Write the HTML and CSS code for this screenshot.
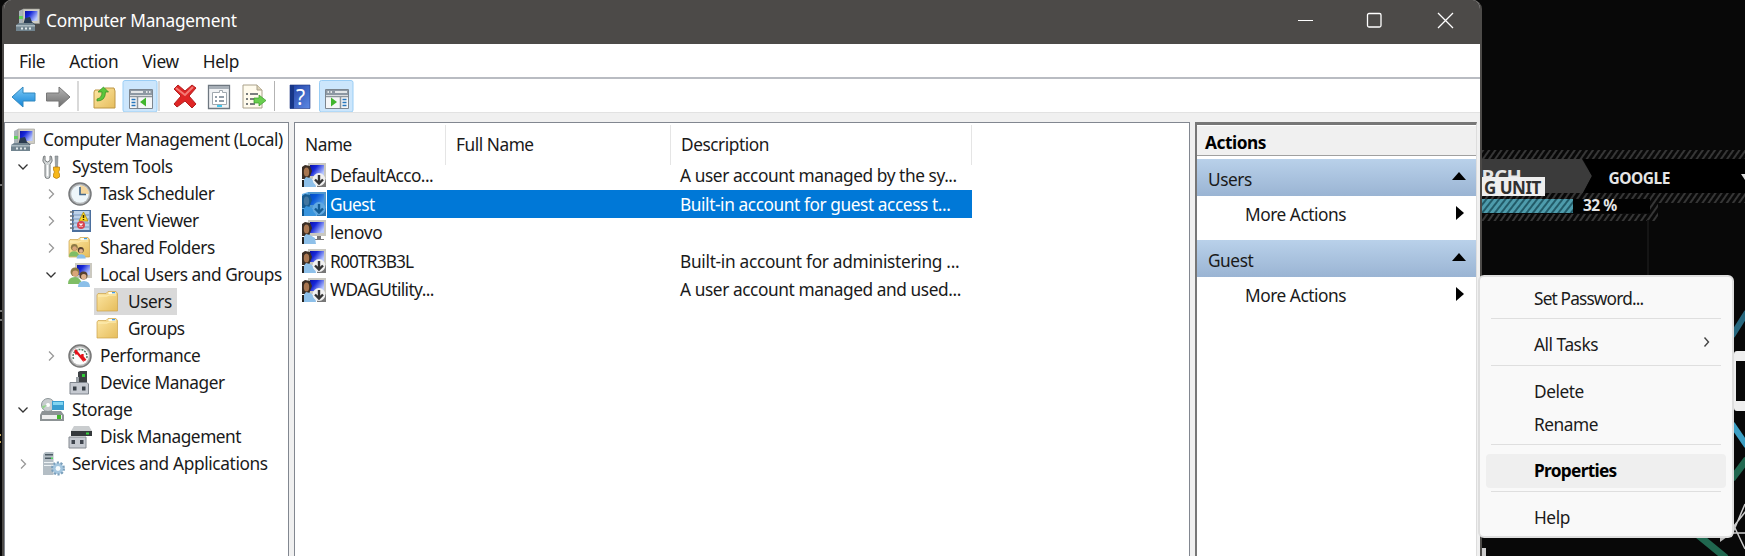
FILE: index.html
```html
<!DOCTYPE html>
<html lang="en"><head><meta charset="utf-8"><title>Computer Management</title><link rel="stylesheet" href="styles.css"></head>
<body>
<svg class="defs" width="0" height="0">
<defs>
<linearGradient id="scr" x1="0" y1="0" x2="1" y2="0.6"><stop offset="0" stop-color="#0a10a8"/><stop offset=".4" stop-color="#1727d8"/><stop offset="1" stop-color="#b9c8ff"/></linearGradient>
<linearGradient id="fold" x1="0" y1="0" x2="1" y2="1"><stop offset="0" stop-color="#fde7a4"/><stop offset="1" stop-color="#e6bd5c"/></linearGradient>
<linearGradient id="blu" x1="0" y1="0" x2="0" y2="1"><stop offset="0" stop-color="#7ecbf7"/><stop offset="1" stop-color="#1283d6"/></linearGradient>
<linearGradient id="gry" x1="0" y1="0" x2="0" y2="1"><stop offset="0" stop-color="#b5b5b5"/><stop offset="1" stop-color="#6d6d6d"/></linearGradient>
<linearGradient id="hlp" x1="0" y1="0" x2="1" y2="1"><stop offset="0" stop-color="#1d3fa3"/><stop offset="1" stop-color="#5f8ae4"/></linearGradient>
<symbol id="computer" viewBox="0 0 24 24"><path d="M3 3l4-2v14H3z" fill="#aab4ba"/><path d="M3 8h4v3H3z" fill="#5fd45a"/><path d="M7 1h16.500v14.500H7z" fill="#cfcdc4" stroke="#9a9a94" stroke-width=".6"/><path d="M9 3h12.500v10H9z" fill="url(#scr)"/><path d="M9 10l5-1 2 5 4 3H7z" fill="#293b50"/><path d="M0 17l3-2h14l2 2v6H0z" fill="#71848f"/><path d="M0 17h19v1.500H0z" fill="#a9b8bf"/><path d="M5 19.500h2v2H5zM9 19.500h2v2H9zM13 19.500h2v2h-2z" fill="#dfe7ea"/></symbol>
<symbol id="tools" viewBox="0 0 24 24"><path d="M1.500 1.500Q-.5 6.500 3 9.500V21q0 2.500 2.500 2.500T8 21V9.500Q11.500 6.500 9.500 1.500L8 1v4.500L5.500 7 3 5.500V1z" fill="#d3d7d8" stroke="#75797b"/><path d="M5.500 10v11" stroke="#fff" stroke-width="1.400"/><path d="M13 1h3l-.5 11h-2z" fill="#9da3a6" stroke="#70777a" stroke-width=".5"/><path d="M11.500 12h6v3l-1 2 1 2V22q-3 3-6 0v-3l1-2-1-2z" fill="#f7b719" stroke="#b5790b" stroke-width=".7"/></symbol>
<symbol id="clock" viewBox="0 0 24 24"><circle cx="12" cy="12" r="11" fill="#b3b6b8" stroke="#77797b" stroke-width="1.500"/><circle cx="12" cy="12" r="8.800" fill="#eef6fa"/><path d="M12 12V3.200A8.800 8.800 0 0 1 20.800 12z" fill="#f5d69c"/><path d="M12 5v7.500h6" fill="none" stroke="#46698b" stroke-width="1.700"/></symbol>
<symbol id="event" viewBox="0 0 24 24"><path d="M4 1h19v22H4z" fill="#4b6f9d"/><path d="M5.500 2h16v19h-16z" fill="#bdd2ea"/><path d="M6 6h15M6 10h15M6 14h15M6 18h15" stroke="#7898c0"/><path d="M15.500 3l4.500 9h-9z" fill="#ffd926" stroke="#a68500" stroke-width=".7"/><path d="M15.500 6v3m0 1v1" stroke="#302700" stroke-width="1.500"/><circle cx="13" cy="16" r="4" fill="#d94350"/><path d="M11.500 14.500l3 3m0-3l-3 3" stroke="#fff" stroke-width="1.200"/><path d="M2 3h4M2 7h4M2 11h4M2 15h4M2 19h4" stroke="#6b737b" stroke-width="1.500"/></symbol>
<symbol id="folder" viewBox="0 0 24 24"><path d="M1 5l1-1.500h8l2-2h8l1.500 2V21H1z" fill="url(#fold)" stroke="#cba249" stroke-width=".7"/><path d="M12.500 2h7v2h-7z" fill="#fffbe7"/><path d="M16 2h3v1.300h-3z" fill="#439ce4"/><path d="M2 6h9l2-1h7" fill="none" stroke="#fff1b9"/></symbol>
<symbol id="people" viewBox="0 0 24 24"><circle cx="7" cy="9" r="4.500" fill="#8d7a45"/><circle cx="7.300" cy="10.500" r="3" fill="#d9a579"/><path d="M0 21q0-7 7-7 5 0 7 7z" fill="#7fbd65"/><circle cx="15.500" cy="12.500" r="4" fill="#57402f"/><circle cx="15.800" cy="13.800" r="2.700" fill="#dfb18d"/><path d="M10 24q0-6 6-6t6 6z" fill="#8bbfe9"/></symbol>
<symbol id="shared" viewBox="0 0 24 24"><use href="#folder" width="24" height="24"/><g transform="translate(1 4.500) scale(.76)"><use href="#people" width="24" height="24"/></g></symbol>
<symbol id="groups" viewBox="0 0 24 24"><path d="M7 0h17v15H7z" fill="#cbc9c0"/><path d="M9 2h13v10H9z" fill="url(#scr)"/><use href="#people" width="24" height="24"/></symbol>
<symbol id="perf" viewBox="0 0 24 24"><circle cx="12" cy="12" r="11" fill="#b5b5b5" stroke="#777" stroke-width="1.500"/><circle cx="12" cy="12" r="8.800" fill="#fbfbfb"/><path d="M5.500 15A7 7 0 1 1 18.500 15" fill="none" stroke="#567b69" stroke-width="1.500" stroke-dasharray="2 1"/><path d="M7 6l7.500 9V10M7.500 6.500l1 4M13 11l4.500 5.500" fill="none" stroke="#e41119" stroke-width="2.300"/></symbol>
<symbol id="device" viewBox="0 0 24 24"><path d="M10 1l2-1h7v12h-9z" fill="#3d4144"/><path d="M8 6h3v6H8z" fill="#9aa0a5"/><path d="M14 3h3v3h-3z" fill="#30ce38"/><path d="M2 11.500h17l1.500 1.500v10H2z" fill="#c6cad1" stroke="#80868e"/><path d="M5 15.500h3.500v4H5zM14 15.500h3.500v4H14z" fill="#394048"/></symbol>
<symbol id="storage" viewBox="0 0 24 24"><circle cx="8" cy="7" r="6.500" fill="#c8cdcf" stroke="#8d9698"/><circle cx="8" cy="7" r="2" fill="#fff"/><path d="M2 8l5-1-4 4z" fill="#91d78b"/><path d="M12 3h12v9H12z" fill="#3a9ed0"/><path d="M13 4h10v3H13z" fill="#82d5f1"/><path d="M2 13h19l3 4v6H0v-6z" fill="#8d9395"/><path d="M2 17h20v4H2z" fill="#eee"/><path d="M17 17h4v4h-4z" fill="#42b52c"/></symbol>
<symbol id="disk" viewBox="0 0 24 24"><path d="M6 1h15l3 5H3z" fill="#cacdcf"/><path d="M3 6h21v5H3z" fill="#35393c"/><path d="M18 7.500h3v2h-3z" fill="#39d43e"/><path d="M1 12h17v11H1z" fill="#c6cad1" stroke="#858a91"/><path d="M3.500 15H7v4H3.500zM12 15h3.500v4H12z" fill="#3f454e"/></symbol>
<symbol id="services" viewBox="0 0 24 24"><path d="M2 1l1.500-1h8v23H1V3z" fill="#b4bec5"/><path d="M3 2h8v1.500H3zM3 5.500h6V7H3z" fill="#4c5b65"/><path d="M2 10.500h9M2 13.500h9" stroke="#eef3f5"/><path d="M9 5.500h2V7H9z" fill="#50d960"/><circle cx="16" cy="16.500" r="5.500" fill="#aecde4" stroke="#7a9fbb" stroke-width="3" stroke-dasharray="2 1.450"/><circle cx="16" cy="16.500" r="5" fill="#a4c6df"/><circle cx="16" cy="16.500" r="2.400" fill="#f5fafc"/></symbol>
<symbol id="user" viewBox="0 0 24 24"><path d="M6 0h18v16H6z" fill="#c9c8c0"/><path d="M8 2h14v11H8z" fill="url(#scr)"/><path d="M15 16h4v3h3v1H12v-1h3z" fill="#777"/><path d="M0 4l3-2 5 1 2 5-3 8H0z" fill="#3a2d24"/><ellipse cx="4.500" cy="9" rx="2.700" ry="4.500" fill="#a87650"/><path d="M1 18l3-4 4 1 5 3 1 6H2z" fill="#8ec0e9"/><path d="M0 17h2v7H0z" fill="#222"/></symbol>
<symbol id="userdown" viewBox="0 0 24 24"><path d="M16 12h8v12h-9z" fill="#777"/><use href="#user" width="24" height="24"/><circle cx="17" cy="16.500" r="6.400" fill="#f1f1f1"/><path d="M17 12v8m-4-3.500l4 4 4-4" fill="none" stroke="#333" stroke-width="2.400"/></symbol>
<symbol id="layout" viewBox="0 0 24 20"><path d="M.5.500h23v19H.5z" fill="#f5f6f7" stroke="#7c858e"/><path d="M1 1h22v5H1z" fill="#8d98a3"/><path d="M2 3h12M17 3h1.500M20 3h1.500" stroke="#fff" stroke-width="1.300"/><path d="M8.500 7v12M1 7.500h22" stroke="#8d959c" stroke-width="1.500"/><path d="M2.500 10.500h4M2.500 13.500h4M2.500 16.500h4" stroke="#2676bd" stroke-width="1.500"/></symbol>
<symbol id="down" viewBox="0 0 12 12"><path d="M1.500 3.500L6 8l4.500-4.500" fill="none" stroke="#333" stroke-width="1.300"/></symbol>
<symbol id="right" viewBox="0 0 12 12"><path d="M4 1.500L8.500 6 4 10.500" fill="none" stroke="#999" stroke-width="1.300"/></symbol>
<pattern id="hatch" width="5" height="5" patternUnits="userSpaceOnUse" patternTransform="rotate(35)"><path d="M0 0h2v5H0z" fill="#363636"/></pattern>
<pattern id="cyan" width="5" height="5" patternUnits="userSpaceOnUse" patternTransform="rotate(38)"><path d="M0 0h5v5H0z" fill="#225b68"/><path d="M0 0h3v5H0z" fill="#4e9cac"/></pattern>
</defs></svg>
<svg class="desktop" width="1745" height="556">
<path d="M0 185h2M0 311h2M0 320h2" stroke="#ddd"/><path d="M0 435h1M0 442h1" stroke="#c6a85d" stroke-width="2"/>
<path d="M1480 150h265v9h-265zM1480 193h265v10h-265zM1480 214h178v7h-178zM1650 193h8v28h-8z" fill="url(#hatch)"/>
<path d="M1481 159h101l10 17-9 17h-102z" fill="#3b3b3b"/><path d="M1583 159h162v34h-162l9-17z"/><path d="M1480 199h170v14h-170z" fill="#020202"/>
<text x="1447" y="184" class="desk-search">SEARCH</text><path d="M1480 177h65v19h-65z" fill="#eee"/><text x="1484" y="193.500" class="desk-unit">G UNIT</text>
<path d="M1480 199h93v14h-93z" fill="url(#cyan)"/><text x="1583" y="211" class="desk-label">32 %</text><text x="1608.500" y="184" class="desk-label">GOOGLE</text><path d="M1741 174h4v6z" fill="#ddd"/>
<path d="M1648 220v56" stroke="#151515" stroke-width="2"/>
<path d="M1732 336l15-24" stroke="#27677e" stroke-width="6"/><path d="M1732 424l15 22" stroke="#3c9fc4" stroke-width="6"/><path d="M1732 479l15-20M1698 535l28 23" stroke="#20674f" stroke-width="7"/>
<path d="M1745 351h-8q-3 0-3 3v54q0 3 3 3h8v-10h-9v-40h9z" fill="#eee"/>
<path d="M1733 533h12M1734 526l12-15M1734 526l11 23M1731 537l14-33" stroke="#ccc" stroke-width="1.500"/><path d="M1720 535v7l7-5z" fill="#bbb"/><path d="M1482 548h4v8h-4z" fill="#ccc"/>
</svg>
<main class="window">
<header class="title"><svg class="i24"><use href="#computer"/></svg><span>Computer Management</span><svg class="controls" width="162" height="20"><path d="M3 10.500h15" stroke="#fff"/><rect x="72.500" y="3.500" width="13.500" height="13.500" rx="1.500" fill="none" stroke="#fff" stroke-width="1.300"/><path d="M143 3l15 15m0-15l-15 15" stroke="#fff" stroke-width="1.300"/></svg></header>
<nav class="menu"><span>File</span><span>Action</span><span>View</span><span>Help</span></nav>
<div class="toolbar"><svg width="360" height="33" viewBox="4 79 360 33">
<path d="M12 97l11-10v6h12v8H23v6z" fill="url(#blu)" stroke="#3188bf"/><path d="M70 97L59 87v6H46.500v8H59v6z" fill="url(#gry)" stroke="#777"/>
<path d="M78 81v30M159 81v30M274.500 81v30" stroke="#b3b3b3"/>
<path d="M94 92l1-2h8l2-2h9l1 3v17H94z" fill="url(#fold)" stroke="#bd9645"/><path d="M97 99q5-1 5-7h-4l5.500-5 5 5h-3q0 9-8.500 9z" fill="#5ac63c" stroke="#328c1f" stroke-width=".7"/>
<rect x="123" y="80.500" width="34" height="31.500" rx="2" fill="#cce6fc" stroke="#9bcef5"/><use href="#layout" x="129" y="89" width="24" height="20"/><path d="M146 97.500v9l-6-4.500z" fill="#40b52d"/>
<path d="M174 89l4-4 7 6 7-6 4 3-7 8 7 8-4 4-7-7-8 6-3-3 7-8z" fill="#df2525" stroke="#b32020"/><path d="M176 88l9 7 8-8" fill="none" stroke="#f47b76" stroke-width="2"/>
<path d="M208.500 85.500h21v23h-21z" fill="#f1f3f5" stroke="#6e7780" stroke-width="1.300"/><path d="M209 86h20v3h-20z" fill="#a7afb7"/><path d="M212.500 92.500h7v-2h3v2h4v12h-14z" fill="#fff" stroke="#a0a8af"/><path d="M215 97h2m2 0h5m-9 4h2m2 0h5" stroke="#6e7d8c" stroke-width="1.500"/><path d="M217 105h5v2h-5z" fill="#43c7ee"/>
<path d="M243 85h14l5 5v18h-19z" fill="#fffbed" stroke="#aaa18a"/><path d="M257 85v5h5" fill="#ddd4b8" stroke="#aaa18a"/><path d="M246 94h2m2 0h8M246 99h2m2 0h5M246 104h2m2 0h5" stroke="#4f555a" stroke-width="1.500"/><path d="M254 98h5v-3l7 5.500-7 5.500v-3h-5z" fill="#69ce4e" stroke="#389b29" stroke-width=".7"/>
<path d="M290 85h20v23.500h-20z" fill="url(#hlp)" stroke="#172f7c" stroke-width=".6"/><path d="M290 85h4v23.500h-4z" fill="#173686"/><text x="296" y="104.500" class="question">?</text>
<rect x="319.500" y="80.500" width="33.500" height="31.500" rx="2" fill="#cce6fc" stroke="#9bcef5"/><use href="#layout" transform="translate(349 89) scale(-1 1)" width="24" height="20"/><path d="M331 97.500v9l6-4.500z" fill="#40b52d"/>
</svg></div>
<div class="panes">
<section class="tree">
<div class="root"><svg class="i24"><use href="#computer"/></svg><span>Computer Management (Local)</span></div>
<div class="l1"><svg class="ch"><use href="#down"/></svg><svg class="i24"><use href="#tools"/></svg><span>System Tools</span></div>
<div class="l2"><svg class="ch"><use href="#right"/></svg><svg class="i24"><use href="#clock"/></svg><span>Task Scheduler</span></div>
<div class="l2"><svg class="ch"><use href="#right"/></svg><svg class="i24"><use href="#event"/></svg><span>Event Viewer</span></div>
<div class="l2"><svg class="ch"><use href="#right"/></svg><svg class="i24"><use href="#shared"/></svg><span>Shared Folders</span></div>
<div class="l2"><svg class="ch"><use href="#down"/></svg><svg class="i24"><use href="#groups"/></svg><span>Local Users and Groups</span></div>
<div class="l3 selected"><svg class="i24"><use href="#folder"/></svg><span>Users</span></div>
<div class="l3"><svg class="i24"><use href="#folder"/></svg><span>Groups</span></div>
<div class="l2"><svg class="ch"><use href="#right"/></svg><svg class="i24"><use href="#perf"/></svg><span>Performance</span></div>
<div class="l2"><i class="ch"></i><svg class="i24"><use href="#device"/></svg><span>Device Manager</span></div>
<div class="l1"><svg class="ch"><use href="#down"/></svg><svg class="i24 wide"><use href="#storage"/></svg><span>Storage</span></div>
<div class="l2"><i class="ch"></i><svg class="i24"><use href="#disk"/></svg><span>Disk Management</span></div>
<div class="l1"><svg class="ch"><use href="#right"/></svg><svg class="i24"><use href="#services"/></svg><span>Services and Applications</span></div>
</section>
<section class="list">
<div class="head"><span>Name</span><span>Full Name</span><span>Description</span></div>
<div class="row"><svg class="i24"><use href="#userdown"/></svg><span class="name">DefaultAcco...</span><span class="desc">A user account managed by the sy...</span></div>
<div class="row active"><svg class="i24"><use href="#userdown"/><path d="M0 2l6-2h18v24H0z" fill="#0078d7" opacity=".6"/></svg><span class="name">Guest</span><span class="desc">Built-in account for guest access t...</span></div>
<div class="row"><svg class="i24"><use href="#user"/></svg><span class="name loose">lenovo</span><span class="desc"></span></div>
<div class="row"><svg class="i24"><use href="#userdown"/></svg><span class="name tight">R00TR3B3L</span><span class="desc loose">Built-in account for administering ...</span></div>
<div class="row"><svg class="i24"><use href="#userdown"/></svg><span class="name">WDAGUtility...</span><span class="desc">A user account managed and used...</span></div>
</section>
<section class="actions">
<h2>Actions</h2>
<div class="band"><span>Users</span><svg width="14" height="8"><path d="M0 8l7-8 7 8z"/></svg></div><div class="more"><span>More Actions</span><svg width="8" height="14"><path d="M0 0l8 7-8 7z"/></svg></div>
<div class="band"><span>Guest</span><svg width="14" height="8"><path d="M0 8l7-8 7 8z"/></svg></div><div class="more"><span>More Actions</span><svg width="8" height="14"><path d="M0 0l8 7-8 7z"/></svg></div>
</section>
</div>
</main>
<aside class="context">
<div class="tight">Set Password...</div><hr><div>All Tasks<svg width="8" height="12"><path d="M1.500 1.500l4 4.500-4 4.500" fill="none" stroke="#444" stroke-width="1.400"/></svg></div><hr><div>Delete</div><div>Rename</div><hr><div class="prop">Properties</div><hr><div>Help</div>
</aside>
</body></html>
```
FILE: styles.css
```css
* { box-sizing: border-box; }
body { margin: 0; width: 1745px; height: 556px; overflow: hidden; position: relative; background: #080808; color: #1a1a1a; font: 17.3px/24px "Noto Sans", "Open Sans", sans-serif; letter-spacing: -.46px; white-space: nowrap; }
svg { flex: none; display: block; }
.defs { position: absolute; }
.desktop { position: absolute; left: 0; top: 0; }
.desk-search, .desk-label, .desk-unit { font-weight: 700; font-size: 15.5px; fill: #e6e6e6; letter-spacing: -.5px; }
.desk-search { font-size: 20px; }
.desk-unit { fill: #303030; font-size: 17px; }
.question { fill: #fff; font: 400 21px "Noto Sans", sans-serif; }
.i24 { width: 24px; height: 24px; }
.window { position: absolute; left: 2px; top: 0; width: 1480px; height: 570px; border: solid #4c4a48; border-width: 0 2px; border-radius: 9px 9px 0 0; overflow: hidden; background: #f0f0f0; }
.title { height: 44px; background: #4c4a48; color: #fff; display: flex; align-items: center; padding: 0 23px 4px 12px; gap: 6px; letter-spacing: -.25px; }
.title span { padding-top: 2px; }
.controls { margin-left: auto; }
.menu { height: 35px; background: #fff; border-bottom: 2px solid #b9bcc2; padding: 2px 15px 0; display: flex; align-items: center; gap: 24px; letter-spacing: -.35px; }
.toolbar { height: 34px; background: #fff; border-bottom: 1px solid #e2e2e2; }
.panes { display: grid; grid-template-columns: 285px 896px 282px; gap: 5px; padding-top: 9px; height: 448px; }
.tree, .list { background: #fff; border: 1.500px solid #828790; }
.tree { padding-top: 3px; }
.tree > div { height: 27px; display: flex; align-items: center; }
.root { padding-left: 6px; gap: 8px; }
.ch { width: 12px; height: 12px; }
.l1 { padding-left: 12px; letter-spacing: -.38px; }
.l2 { padding-left: 40px; }
.l1 .i24 { margin: 0 6px 0 13px; }
.l1 .wide { margin: 0 8px 0 11px; }
.l2 .i24 { margin: 0 8px 0 11px; }
.l3 { margin-left: 89px; padding: 0 5px 0 2px; width: max-content; gap: 8px; }
.selected { background: #d9d9d9; }
.list { padding-top: 2px; }
.head { height: 36px; width: 677px; display: grid; grid-template-columns: 151px 225px 301px; }
.head span { border-right: 1px solid #e5e5e5; padding: 8px 10px; }
.row { height: 28.600px; width: 677px; display: grid; grid-template-columns: 25px 344px 301px; align-items: center; padding-left: 7px; }
.name, .desc { height: 28.600px; line-height: 30px; padding-left: 3px; }
.desc { padding-left: 9px; letter-spacing: -.42px; }
.name { letter-spacing: -.6px; }
.tight { letter-spacing: -.85px; }
.loose { letter-spacing: -.3px; }
.active .name, .active .desc { background: #0078d7; color: #fff; }
.actions { background: #fff; border: solid #777; border-width: 3px 0 0 2px; border-right: 1px solid #ddd; }
h2 { margin: 1px 0 3px; height: 30px; font-size: 17.300px; line-height: 33px; padding-left: 8px; background: #f0f0f0; border-bottom: 1.500px solid #a0a0a0; color: #000; }
.band { height: 37px; background: linear-gradient(#b9d1ea, #9ab4d3); display: flex; align-items: center; padding: 4px 10px 0 11px; }
.band svg { margin: -7px 0 0 auto; }
.more { height: 44px; display: flex; align-items: center; padding: 0 12px 6px 48px; }
.more svg { margin: -4px 0 0 auto; }
.context { position: absolute; left: 1478px; top: 275px; width: 256px; height: 263px; background: #f9f9f9; border: 2px solid #dedede; border-radius: 6px; padding: 5px 6px; }
.context div { height: 33.200px; line-height: 33px; padding: 0 0 0 48px; display: flex; align-items: center; border-radius: 4px; color: #1b1b1b; }
.context svg { margin: -5px 15px 0 auto; }
.context hr { margin: 3px 5px 9.200px; height: 1px; border: 0; background: #dfdfdf; }
.context .tight { letter-spacing: -.85px; }
.context .prop { background: #efefef; color: #000; font-weight: 700; letter-spacing: -.7px; }
```
